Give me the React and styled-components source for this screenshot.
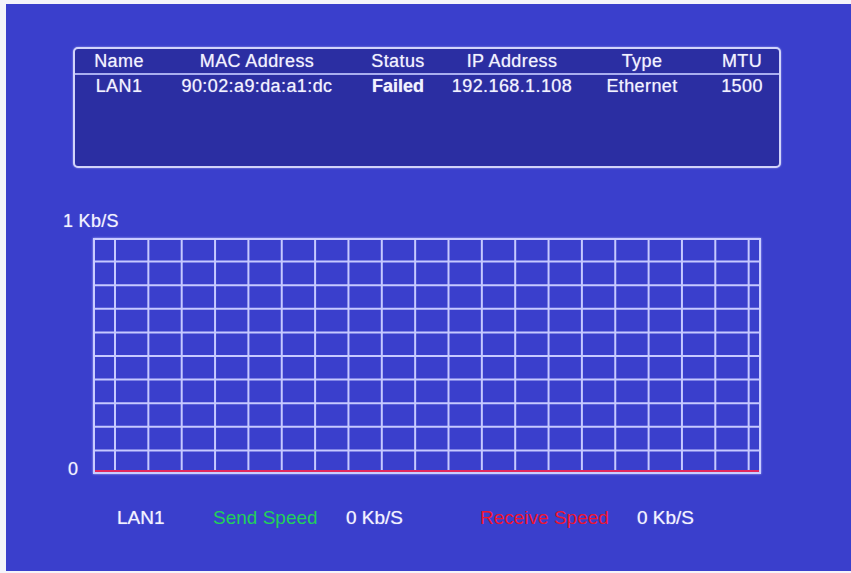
import React from 'react';
import styled, { createGlobalStyle } from 'styled-components';

const GlobalStyle = createGlobalStyle`
  html, body {
    margin: 0;
    padding: 0;
    background: #f4f4fa;
  }
  body {
    font-family: "Liberation Sans", Arial, sans-serif;
  }
`;

const Screen = styled.div`
  display: flex;
  flex-direction: column;
  box-sizing: border-box;
  margin: 4px 0 2px 6px;
  height: 567px;
  padding-top: 43px;
  background: #3a3fcc;
  color: #f2f2ff;
  text-shadow: 0 0 1px rgba(255, 255, 255, 0.6);
`;

const Panel = styled.div`
  box-sizing: border-box;
  margin-left: 67px;
  width: 708px;
  height: 121px;
  border: 2px solid #d2d4fa;
  border-radius: 5px;
  background: #2b2ea2;
  box-shadow: 0 0 2px rgba(210, 212, 250, 0.7);
`;

const Row = styled.div`
  display: grid;
  grid-template-columns: 88px 188px 94px 134px 126px 74px;
  height: ${(p) => (p.$head ? '23px' : '22px')};
  padding-top: ${(p) => (p.$head ? '1px' : '0')};
  border-bottom: ${(p) => (p.$head ? '2px solid #a9aef0' : 'none')};
`;

const Cell = styled.div`
  text-align: center;
  font-size: 18px;
  line-height: ${(p) => (p.$head ? '23px' : '22px')};
  letter-spacing: ${(p) => (p.$bold ? '0' : '0.4px')};
  font-weight: ${(p) => (p.$bold ? 700 : 400)};
  white-space: nowrap;
`;

const ScaleLabel = styled.div`
  margin: 43px 0 0 57px;
  font-size: 18px;
  line-height: 20px;
  letter-spacing: 0.3px;
`;

const ChartRow = styled.div`
  display: flex;
  margin-top: 7px;
`;

const Axis = styled.div`
  display: flex;
  flex-direction: column;
  justify-content: flex-end;
  box-sizing: border-box;
  width: 87px;
  padding-left: 62px;
  margin-bottom: -5px;
  font-size: 18px;
  line-height: 20px;
`;

const ChartBox = styled.div`
  box-sizing: border-box;
  width: 668px;
  height: 236px;
  border: 2px solid #c9ccff;
  box-shadow: 0 0 2px rgba(201, 204, 255, 0.8);

  svg {
    display: block;
  }
`;

const Legend = styled.div`
  display: grid;
  grid-template-columns: 96px 133px 134px 157px auto;
  margin: 34px 0 0 111px;
  font-size: 19px;
  line-height: 20px;
`;

const LegendItem = styled.span`
  color: ${(p) => p.$color || '#f2f2ff'};
  text-shadow: ${(p) => (p.$color ? 'none' : '0 0 1px rgba(255,255,255,0.6)')};
  white-space: nowrap;
`;

const columns = ['Name', 'MAC Address', 'Status', 'IP Address', 'Type', 'MTU'];
const iface = {
  name: 'LAN1',
  mac: '90:02:a9:da:a1:dc',
  status: 'Failed',
  ip: '192.168.1.108',
  type: 'Ethernet',
  mtu: '1500',
};

const W = 664;
const H = 232;

function Graph() {
  const vLines = Array.from({ length: 20 }, (_, i) => 20 + i * 33.35);
  const hLines = Array.from({ length: 9 }, (_, i) => 21.6 + i * 23.6);
  return (
    <svg width={W} height={H} viewBox={`0 0 ${W} ${H}`}>
      {vLines.map((x) => (
        <line key={`v${x}`} x1={x} y1={0} x2={x} y2={H} stroke="#c6c9ff" strokeWidth="2" />
      ))}
      {hLines.map((y) => (
        <line key={`h${y}`} x1={0} y1={y} x2={W} y2={y} stroke="#c6c9ff" strokeWidth="2" />
      ))}
      {/* send and receive traces, both flat at zero */}
      <line x1={0} y1={231} x2={W} y2={231} stroke="#2bd35c" strokeWidth="2" />
      <line x1={0} y1={231} x2={W} y2={231} stroke="#e2285e" strokeWidth="2" />
    </svg>
  );
}

export default function App() {
  return (
    <>
      <GlobalStyle />
      <Screen>
        <Panel>
          <Row $head>
            {columns.map((c) => (
              <Cell key={c} $head>
                {c}
              </Cell>
            ))}
          </Row>
          <Row>
            <Cell>{iface.name}</Cell>
            <Cell>{iface.mac}</Cell>
            <Cell $bold>{iface.status}</Cell>
            <Cell>{iface.ip}</Cell>
            <Cell>{iface.type}</Cell>
            <Cell>{iface.mtu}</Cell>
          </Row>
        </Panel>

        <ScaleLabel>1 Kb/S</ScaleLabel>
        <ChartRow>
          <Axis>0</Axis>
          <ChartBox>
            <Graph />
          </ChartBox>
        </ChartRow>

        <Legend>
          <LegendItem>LAN1</LegendItem>
          <LegendItem $color="#22d05a">Send Speed</LegendItem>
          <LegendItem>0 Kb/S</LegendItem>
          <LegendItem $color="#ee1530">Receive Speed</LegendItem>
          <LegendItem>0 Kb/S</LegendItem>
        </Legend>
      </Screen>
    </>
  );
}
